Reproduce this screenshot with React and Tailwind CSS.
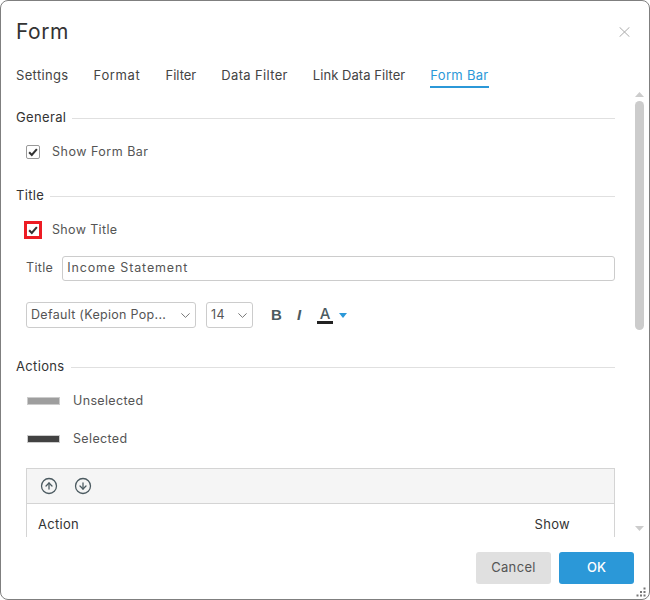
import React from "react";
import { CircleArrowUp, CircleArrowDown } from "lucide-react";

function Section({ title, className = "", children }) {
  return (
    <div className={className}>
      <div className="flex items-center h-[18px]">
        <span className="text-[13px] tracking-[0.35px] text-[#333] pr-[6px]">{title}</span>
        <div className="flex-1 h-px bg-[#e0e0e0]" />
      </div>
      {children}
    </div>
  );
}

function Check() {
  return (
    <svg viewBox="0 0 14 14" className="w-3 h-3">
      <path d="M2.5 7.2 5.6 10.4 11.5 3.6" fill="none" stroke="#333" strokeWidth="2.4" />
    </svg>
  );
}

function Select({ label, className }) {
  return (
    <div className={`h-[26px] border border-[#ccc] rounded-[3px] flex items-center pl-1 pr-[5px] justify-between text-[#555] text-[12.5px] tracking-[0.3px] ${className}`}>
      <span className="whitespace-nowrap">{label}</span>
      <svg viewBox="0 0 9 5" className="w-[9px] h-[5px]">
        <path d="M.4.4 4.5 4.4 8.6.4" fill="none" stroke="#777" strokeWidth="1" />
      </svg>
    </div>
  );
}

export default function App() {
  const tabs = [
    ["Settings", "tracking-[0.35px]"],
    ["Format", "tracking-[0.65px]"],
    ["Filter", "tracking-[0px]"],
    ["Data Filter", "tracking-[0.35px]"],
    ["Link Data Filter", "tracking-[0.05px]"],
  ];
  return (
    <div
      className="w-[650px] h-[600px] bg-white border border-[#7f7f7f] rounded-lg flex flex-col overflow-hidden relative"
      style={{ fontFamily: '"Inter", "Open Sans", sans-serif' }}
    >
      <div className="flex items-start justify-between pl-[15px] pr-[19px] pt-[17px] h-[53px]">
        <span className="text-[21px] leading-[28px] text-[#333] tracking-[0.5px]">Form</span>
        <svg viewBox="0 0 11 10" className="w-[11px] h-[10px] mt-[9px]">
          <path d="M.5.2 10.5 9.8M10.5.2.5 9.8" stroke="#aaa" strokeWidth="1" />
        </svg>
      </div>
      <div className="flex pl-[15px] h-[36px] gap-[25px] text-[13px] text-[#444]">
        {tabs.map(([t, c]) => (
          <div key={t} className={`h-[34px] leading-[42px] whitespace-nowrap ${c}`}>{t}</div>
        ))}
        <div className="h-[34px] leading-[42px] whitespace-nowrap tracking-[0.3px] text-[#2b98d8] border-b-2 border-[#2b98d8] box-border">Form Bar</div>
      </div>

      <div className="flex h-[447px] overflow-hidden">
        <div className="w-[614px] pl-[15px] pt-[19px] shrink-0 overflow-hidden">
          <Section title="General">
            <div className="flex items-center gap-[12px] pl-[10px] mt-[17px] h-[16px] text-[12.5px] tracking-[0.5px] text-[#555]">
              <div className="w-[14px] h-[14px] border border-[#999] rounded-[2px] flex items-center justify-center"><Check /></div>
              Show Form Bar
            </div>
          </Section>

          <Section title="Title" className="mt-[27px]">
            <div className="flex items-center gap-[10px] pl-[8px] mt-[16px] h-[18px] text-[12.5px] tracking-[0.35px] text-[#555]">
              <div className="w-[18px] h-[18px] border-[3px] border-[#ed1c24] flex items-center justify-center"><Check /></div>
              Show Title
            </div>
            <div className="flex items-center pl-[10px] mt-[17px] gap-[9px]">
              <span className="text-[12.5px] tracking-[0.35px] text-[#555]">Title</span>
              <div className="flex-1 h-[25px] border border-[#ccc] rounded-[3px] flex items-center pl-1 text-[12.5px] tracking-[0.85px] text-[#555]">Income Statement</div>
            </div>
            <div className="flex items-center pl-[10px] mt-[21px]">
              <Select label="Default (Kepion Pop..." className="w-[170px]" />
              <Select label="14" className="w-[47px] ml-[10px]" />
              <span className="ml-[18px] w-[11px] text-[15px] font-bold text-[#4b5a60]" style={{ fontFamily: '"Liberation Sans", sans-serif' }}>B</span>
              <span className="ml-[15px] w-[10px] text-[15px] font-bold italic text-[#4b5a60]" style={{ fontFamily: '"Liberation Sans", sans-serif' }}>I</span>
              <span className="ml-[10px] w-[16px] h-[18px] border-b-[3px] border-[#222] text-[15px] leading-[15px] font-medium text-center text-[#4b5a60]">A</span>
              <svg viewBox="0 0 8 5" className="w-2 h-[5px] ml-[6px]"><path d="M0 0h8L4 5z" fill="#2b98d8" /></svg>
            </div>
          </Section>

          <Section title="Actions" className="mt-[30px]">
            <div className="flex items-center gap-[13px] pl-[11px] mt-[16px] h-[18px] text-[12.5px] tracking-[0.35px] text-[#555]">
              <div className="w-[33px] h-[8px] bg-[#9e9e9e] border border-[#ccc]" />
              Unselected
            </div>
            <div className="flex items-center gap-[13px] pl-[11px] mt-[20px] h-[18px] text-[12.5px] tracking-[0.35px] text-[#555]">
              <div className="w-[33px] h-[8px] bg-[#424242] border border-[#ccc]" />
              Selected
            </div>
            <div className="ml-[10px] mt-[20px] border border-b-0 border-[#d4d4d4]">
              <div className="h-[35px] bg-[#f5f5f5] border-b border-[#d4d4d4] flex items-center pl-[13px] gap-[16px]">
                <CircleArrowUp size={18} strokeWidth={1.7} color="#4b5a60" />
                <CircleArrowDown size={18} strokeWidth={1.7} color="#4b5a60" />
              </div>
              <div className="h-[42px] flex items-center justify-between pl-[11px] pr-[44px] text-[13px] tracking-[0.3px] text-[#333]">
                <span>Action</span>
                <span>Show</span>
              </div>
            </div>
          </Section>
        </div>

        <div className="flex-1 pl-[20px] pt-[2px]">
          <div className="w-[9px] flex flex-col items-center">
            <svg viewBox="0 0 9 5" className="w-[9px] h-[5px]"><path d="M0 5h9L4.5 0z" fill="#ccc" /></svg>
            <div className="w-[9px] h-[229px] mt-[4px] rounded-[5px] bg-[#cccccc] shrink-0" />
            <svg viewBox="0 0 9 5" className="w-[9px] h-[5px] mt-[196px]"><path d="M0 0h9L4.5 5z" fill="#ccc" /></svg>
          </div>
        </div>
      </div>

      <div className="flex justify-end gap-2 pr-[15px] pt-[15px]">
        <button className="w-[75px] h-[32px] bg-[#e0e0e0] rounded-[3px] text-[13px] tracking-[0.35px] text-[#555]">Cancel</button>
        <button className="w-[75px] h-[32px] bg-[#2b98d8] rounded-[3px] text-[13px] font-medium text-white">OK</button>
      </div>

      <svg viewBox="0 0 10 10" className="absolute right-[3px] bottom-[2px] w-[10px] h-[10px]">
        <g fill="#777">
          <rect x="7.5" y="0.5" width="2" height="2" />
          <rect x="4" y="4" width="2" height="2" />
          <rect x="7.5" y="4" width="2" height="2" />
          <rect x="0.5" y="7.5" width="2" height="2" />
          <rect x="4" y="7.5" width="2" height="2" />
          <rect x="7.5" y="7.5" width="2" height="2" />
        </g>
      </svg>
    </div>
  );
}
